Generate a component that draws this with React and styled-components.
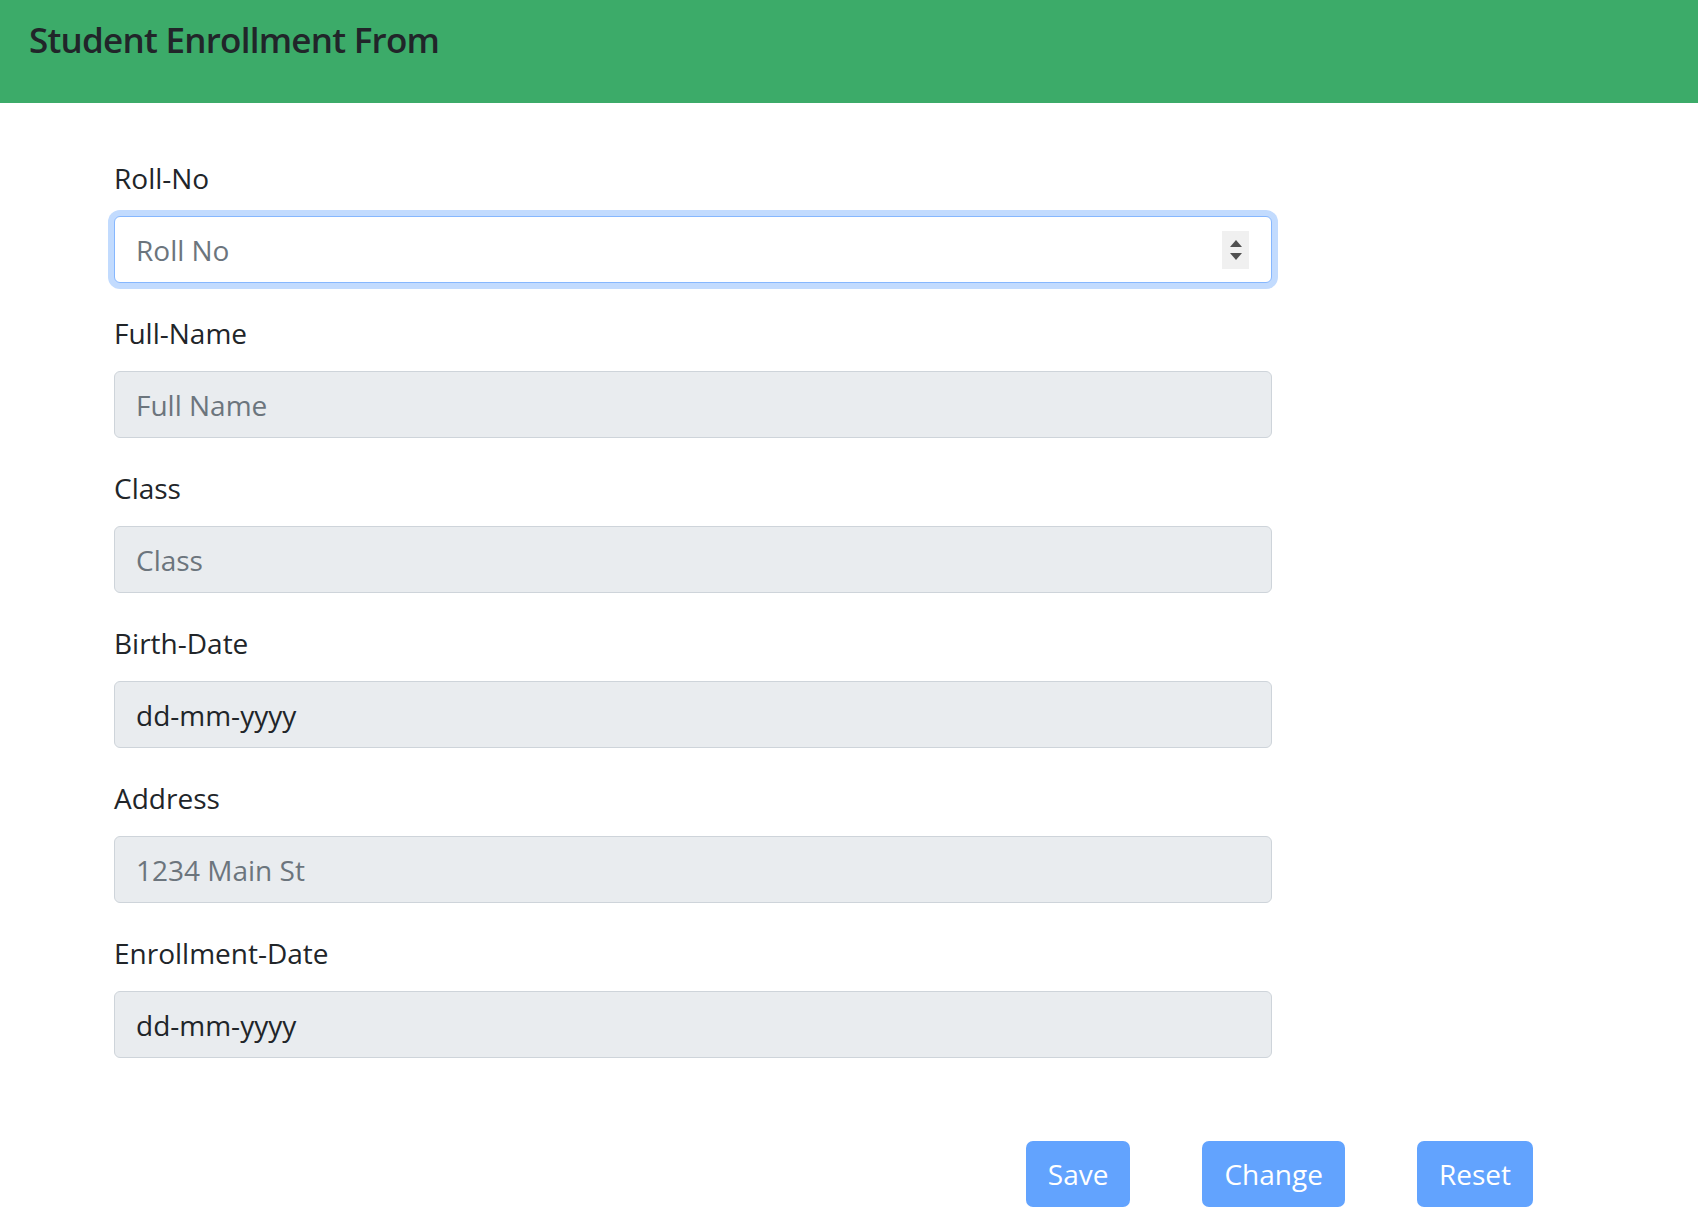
import React from "react";
import styled, { createGlobalStyle } from "styled-components";

const GlobalStyle = createGlobalStyle`
  * {
    box-sizing: border-box;
  }
  body {
    margin: 0;
    background: #fff;
    font-family: "Open Sans", "Noto Sans", sans-serif;
    color: #212529;
  }
`;

const Header = styled.header`
  height: 103px;
  padding: 19px 29px;
  background: #3cab69;
`;

const Title = styled.h5`
  margin: 0;
  font-size: 35px;
  line-height: 42px;
  font-weight: 600;
  letter-spacing: -0.75px;
  color: #212529;
`;

const Form = styled.form`
  padding: 54px 0 0 114px;
`;

const Field = styled.div`
  width: 1158px;
  margin-bottom: 29px;
`;

const Label = styled.label`
  display: block;
  font-size: 28px;
  line-height: 42px;
  margin-bottom: 17px;
  color: #212529;
`;

const InputWrap = styled.div`
  position: relative;
`;

const Input = styled.input`
  display: block;
  width: 100%;
  height: 67px;
  padding: 0 21px;
  font-family: inherit;
  font-size: 28px;
  color: #212529;
  border: 1px solid ${(p) => (p.$focused ? "#86b7fe" : "#ced4da")};
  border-radius: 6px;
  background: ${(p) => (p.$focused ? "#fff" : "#e9ecef")};
  box-shadow: ${(p) => (p.$focused ? "0 0 0 6px #c2dbfe" : "none")};
  outline: none;

  &::placeholder {
    color: #6c757d;
  }
`;

const Spinner = styled.div`
  position: absolute;
  top: 15px;
  right: 23px;
  width: 27px;
  height: 38px;
  background: #f0f0f0;
  display: flex;
  flex-direction: column;
  align-items: center;
  justify-content: center;
  gap: 6px;
`;

const Arrow = styled.span`
  width: 0;
  height: 0;
  border-left: 6px solid transparent;
  border-right: 6px solid transparent;
  ${(p) =>
    p.$up
      ? "border-bottom: 7px solid #505050;"
      : "border-top: 7px solid #505050;"}
`;

const ButtonRow = styled.div`
  display: flex;
  justify-content: flex-end;
  gap: 72px;
  padding-right: 165px;
  margin-top: 83px;
  margin-left: -114px;
`;

const Button = styled.button`
  height: 66px;
  padding: 0 22px;
  font-family: inherit;
  font-size: 28px;
  color: #fff;
  background: #62a3fe;
  border: none;
  border-radius: 7px;
`;

const fields = [
  { label: "Roll-No", placeholder: "Roll No", focused: true, spin: true },
  { label: "Full-Name", placeholder: "Full Name" },
  { label: "Class", placeholder: "Class" },
  { label: "Birth-Date", value: "dd-mm-yyyy" },
  { label: "Address", placeholder: "1234 Main St" },
  { label: "Enrollment-Date", value: "dd-mm-yyyy" },
];

export default function App() {
  return (
    <>
      <GlobalStyle />
      <Header>
        <Title>Student Enrollment From</Title>
      </Header>
      <Form onSubmit={(e) => e.preventDefault()}>
        {fields.map((f) => (
          <Field key={f.label}>
            <Label>{f.label}</Label>
            <InputWrap>
              <Input
                $focused={f.focused}
                placeholder={f.placeholder}
                value={f.value}
                readOnly
              />
              {f.spin && (
                <Spinner>
                  <Arrow $up />
                  <Arrow />
                </Spinner>
              )}
            </InputWrap>
          </Field>
        ))}
        <ButtonRow>
          <Button type="button">Save</Button>
          <Button type="button">Change</Button>
          <Button type="button">Reset</Button>
        </ButtonRow>
      </Form>
    </>
  );
}
